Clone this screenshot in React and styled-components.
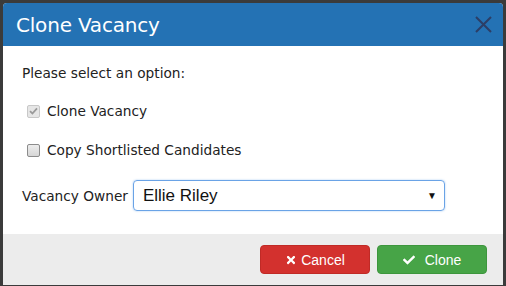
import React from 'react';
import styled, {createGlobalStyle} from 'styled-components';
import {FaTimes, FaCheck} from 'react-icons/fa';

const Global = createGlobalStyle`
  html, body {
    margin: 0;
    padding: 0;
    background: #3b3b3b;
    width: 506px;
    height: 286px;
    overflow: hidden;
  }
`;

const Backdrop = styled.div`
  width: 506px;
  height: 286px;
  padding: 3px 3px 0 3px;
  box-sizing: border-box;
  background: #3b3b3b;
`;

const Modal = styled.div`
  width: 500px;
  background: #fff;
  border-radius: 4px 4px 0 0;
  overflow: hidden;
`;

const Header = styled.div`
  height: 43px;
  background: #2472b4;
  display: flex;
  align-items: center;
  justify-content: space-between;
  padding: 0 10px 0 13px;
  box-sizing: border-box;
`;

const Title = styled.h3`
  margin: 0;
  font-family: "DejaVu Sans", Verdana, sans-serif;
  font-weight: normal;
  font-size: 20px;
  color: #fff;
  letter-spacing: -0.2px;
`;

const Close = styled.button`
  border: none;
  background: none;
  padding: 0;
  width: 20px;
  height: 20px;
  cursor: pointer;
  display: flex;
  align-items: center;
  justify-content: center;
`;

const Body = styled.div`
  height: 188px;
  box-sizing: border-box;
  padding: 19px 19px 0 19px;
  font-family: "DejaVu Sans", Verdana, sans-serif;
  font-size: 13.7px;
  line-height: 16px;
  color: #222;
`;

const Prompt = styled.p`
  margin: 0 0 22px 0;
`;

const CheckRow = styled.label`
  display: flex;
  align-items: center;
  gap: 7px;
  padding-left: 5px;
  margin-bottom: 23px;
  color: #222;
`;

const Box = styled.span`
  width: 13px;
  height: 13px;
  box-sizing: border-box;
  border-radius: 2px;
  border: 1px solid ${p => (p.disabled ? '#c8c8c8' : '#8c8c8c')};
  background: ${p => (p.disabled ? '#e6e6e6' : 'linear-gradient(#ededed, #d6d6d6)')};
  display: flex;
  align-items: center;
  justify-content: center;
`;

const OwnerRow = styled.div`
  display: flex;
  align-items: center;
  gap: 5px;
  margin-top: -1px;
`;

const Select = styled.div`
  width: 312px;
  height: 31px;
  box-sizing: border-box;
  border: 1px solid #6aa3e6;
  border-radius: 4px;
  box-shadow: 0 0 2px rgba(102, 163, 233, 0.6);
  display: flex;
  align-items: center;
  justify-content: space-between;
  padding: 0 7px 0 9px;
  font-family: "Liberation Sans", Arial, sans-serif;
  font-size: 17px;
  color: #111;
`;

const Arrow = styled.span`
  font-size: 10px;
  color: #111;
`;

const Footer = styled.div`
  height: 51px;
  background: #ececec;
  display: flex;
  justify-content: flex-end;
  align-items: center;
  gap: 7px;
  padding: 0 16px 0 0;
  box-sizing: border-box;
`;

const Button = styled.button`
  width: 110px;
  height: 29px;
  border-radius: 4px;
  border: 1px solid ${p => (p.$tone === 'danger' ? '#c02a26' : '#3d963d')};
  background: ${p => (p.$tone === 'danger' ? '#d3312e' : '#47a447')};
  color: #fff;
  font-family: "Liberation Sans", Arial, sans-serif;
  font-size: 14px;
  display: flex;
  align-items: center;
  justify-content: center;
  gap: ${p => (p.$tone === 'danger' ? '4px' : '10px')};
  cursor: pointer;
  svg {
    font-size: ${p => (p.$tone === 'danger' ? '12px' : '12px')};
  }
`;

function CheckGlyph() {
	return (
		<svg width="9" height="8" viewBox="0 0 9 8">
			<path d="M1 4.2 L3.4 6.5 L8 1.3" stroke="#9a9a9a" strokeWidth="1.8" fill="none"/>
		</svg>
	);
}

export default function App() {
	return (
		<Backdrop>
			<Global/>
			<Modal>
				<Header>
					<Title>Clone Vacancy</Title>
					<Close aria-label="close">
						<svg width="19" height="19" viewBox="0 0 19 19">
							<path d="M2 2 L17 17 M17 2 L2 17" stroke="#2c3e66" strokeWidth="2"/>
						</svg>
					</Close>
				</Header>
				<Body>
					<Prompt>Please select an option:</Prompt>
					<CheckRow disabled>
						<Box disabled><CheckGlyph/></Box>
						Clone Vacancy
					</CheckRow>
					<CheckRow>
						<Box/>
						Copy Shortlisted Candidates
					</CheckRow>
					<OwnerRow>
						Vacancy Owner
						<Select>
							Ellie Riley
							<Arrow>▼</Arrow>
						</Select>
					</OwnerRow>
				</Body>
				<Footer>
					<Button $tone="danger"><FaTimes/>Cancel</Button>
					<Button $tone="success"><FaCheck/>Clone</Button>
				</Footer>
			</Modal>
		</Backdrop>
	);
}
